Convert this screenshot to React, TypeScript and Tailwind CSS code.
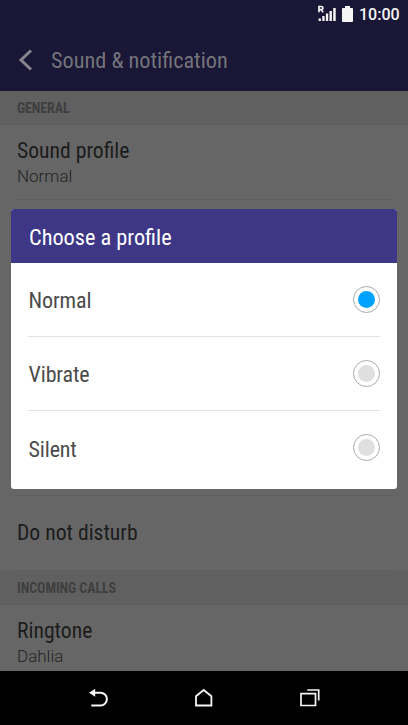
import type { ReactNode } from "react";

type TextProps = { children: ReactNode; className?: string };

function Text({ children, className = "" }: TextProps) {
  return <span className={`block whitespace-nowrap ${className}`}>{children}</span>;
}

function StatusBar() {
  return (
    <div className="flex h-[30px] items-center justify-end pr-[9px] text-[#f5f5f5]">
      <svg className="h-[30px] w-[42px]" viewBox="0 0 42 30" fill="currentColor">
        <path d="M2 12.3V6.500H4.300Q5.900 6.500 5.900 8T4.300 9.700H2M4.200 9.700L6.200 12.300" fill="none" stroke="currentColor" strokeWidth="1.7" />
        <path d="M1.600 18.500h2.300V21H1.600zM5.300 16h2.300v5H5.300zM8.900 13.600h2.300V21H8.900zM12.500 11h2.400v10h-2.400zM16.200 8h2.500v13h-2.500z" />
        <path d="M28 6h5v2h2.200q.8 0 .8.8V21q0 1-.8 1h-9.400q-.8 0-.8-.8V8.800q0-.8.8-.8H28z" />
      </svg>
      <Text className="w-[40px] font-[Roboto,sans-serif] text-[16px] font-medium leading-[30px] [font-stretch:100%]">10:00</Text>
    </div>
  );
}

function Section({ title }: { title: string }) {
  return (
    <div className="flex h-[34px] items-center border-b border-[#5c5c5c] bg-[#606060] pl-[17px]">
      <Text className="pt-[2px] text-[14px] font-bold tracking-[-0.1px] text-[#3f3f3f]">{title}</Text>
    </div>
  );
}

function Setting({ title, value }: { title: string; value?: string }) {
  return (
    <div className="mx-[17px] flex h-[75px] flex-col justify-center border-b border-[#5e5e5e]">
      <Text className={`text-[21.650px] leading-[26px] text-[#1c1c1c] ${value ? "pt-[2px]" : ""}`}>{title}</Text>
      {value && (
        <Text className="font-[Roboto,sans-serif] text-[17px] font-light leading-[25px] text-[#242424] [font-stretch:100%]">{value}</Text>
      )}
    </div>
  );
}

function Option({ label, selected = false, last = false }: { label: string; selected?: boolean; last?: boolean }) {
  return (
    <div className={`mx-[17px] flex h-[74px] items-center justify-between ${last ? "" : "border-b border-[#e3e3e3]"}`}>
      <Text className="pl-[0.5px] pt-[3px] text-[22px] leading-[26px] tracking-[-0.12px] text-[#4b4b4b]">{label}</Text>
      <span className={`flex size-[27px] items-center justify-center rounded-full border border-[#aaa] ${last ? "-mt-px" : ""}`}>
        <span className={`size-[17px] rounded-full ${selected ? "bg-[#00a2ff]" : "bg-[#dfdfdf]"}`} />
      </span>
    </div>
  );
}

function NavBar() {
  return (
    <div className="flex h-[54px] shrink-0 items-center justify-center gap-[82px] bg-black">
      <svg className="h-[24px] w-[24px]" viewBox="0 0 24 24" fill="none" stroke="#f5f5f5" strokeWidth="2">
        <path d="M7 6.700H14.500A6.400 6.400 0 0 1 14.500 19.500H5.300" />
        <path d="M3 6.700L9.200 2.700V10.700Z" fill="#f5f5f5" stroke="none" />
      </svg>
      <svg className="h-[24px] w-[24px]" viewBox="0 0 24 24" fill="none" stroke="#f5f5f5" strokeWidth="1.8">
        <path d="M4 19.500V10.200L11.700 4L19.400 10.200V19.500Z" />
      </svg>
      <svg className="h-[24px] w-[24px]" viewBox="0 0 24 24" fill="none" stroke="#f5f5f5" strokeWidth="1.700">
        <path d="M3 7.600H17.500V19.500H3Z" />
        <path d="M9.300 4H20.700V14.500" />
      </svg>
    </div>
  );
}

export default function App() {
  return (
    <main className="relative flex h-[725px] w-[408px] flex-col overflow-hidden bg-[#666] font-['Roboto_Condensed',Roboto,sans-serif] [font-stretch:75%]">
      <header className="h-[91px] shrink-0 bg-[#191735]">
        <StatusBar />
        <div className="flex h-[61px] items-center pl-[18px]">
          <svg className="h-[24px] w-[16px]" viewBox="0 0 16 24" fill="none" stroke="#858490" strokeWidth="3">
            <path d="M13 1.500L3 11L13 20.500" />
          </svg>
          <Text className="pb-[2px] pl-[17px] text-[22.250px] leading-[26px] text-[#74737c]">Sound &amp; notification</Text>
        </div>
      </header>
      <div className="min-h-0 flex-1 overflow-hidden">
        <Section title="GENERAL" />
        <Setting title="Sound profile" value="Normal" />
        <div className="mx-[17px] h-[296px] border-b border-[#5e5e5e]" />
        <Setting title="Do not disturb" />
        <Section title="INCOMING CALLS" />
        <Setting title="Ringtone" value="Dahlia" />
      </div>
      <NavBar />
      <section role="dialog" className="absolute left-[11px] top-[209px] h-[280px] w-[386px] overflow-hidden rounded-[3px] bg-white">
        <h2 className="flex h-[54px] items-center bg-[#3d3785] pl-[18px]">
          <Text className="pt-px text-[22.300px] leading-[26px] text-white">Choose a profile</Text>
        </h2>
        <Option label="Normal" selected />
        <Option label="Vibrate" />
        <Option label="Silent" last />
      </section>
    </main>
  );
}
